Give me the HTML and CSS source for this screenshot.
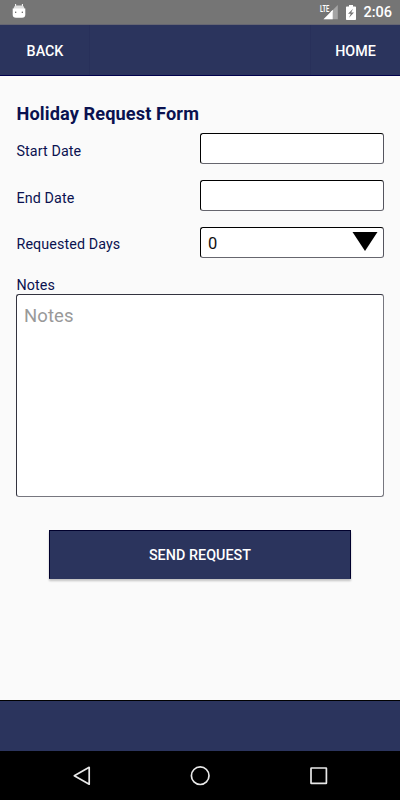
FILE: index.html
```html
<!DOCTYPE html>
<html lang="en">
<head>
<meta charset="utf-8">
<title>Holiday Request Form</title>
<link rel="stylesheet" href="styles.css">
</head>
<body>
<div class="screen">
  <div class="status">
    <svg class="android" width="14" height="16" viewBox="0 0 14 16">
      <path d="M3.6 1v4M10.4 1v4" stroke="#fff" stroke-width="1"/>
      <path d="M1.500 6Q2 2.600 4.500 2.600H9.500Q12 2.600 12.500 6Z" fill="#ddd"/>
      <path d="M.7 5.600H13.300V11.500Q13.300 14.800 10 14.800H4Q.7 14.800 .7 11.500Z" fill="#fff"/>
      <circle cx="3.700" cy="9.200" r=".7" fill="#555"/><circle cx="10.300" cy="9.200" r=".7" fill="#555"/>
    </svg>
    <div class="status-right">
      <svg class="signal" width="20" height="16" viewBox="0 0 20 16">
        <path d="M18.800 1V15.300H4.500Z" fill="#a5a5a5"/>
        <path d="M13.700 6V15.300H4.500Z" fill="#fff"/>
        <path d="M0 0H11V8.300H0Z" fill="#757575"/>
        <text x="1" y="7.600" class="lte" textLength="9.200" lengthAdjust="spacingAndGlyphs">LTE</text>
        <path d="M13.700 6V8.300H11.400Z" fill="#fff"/>
      </svg>
      <svg class="battery" width="10" height="15" viewBox="0 0 10 15">
        <path d="M3 0H7V1.500H9.200Q10 1.500 10 2.300V14.200Q10 15 9.200 15H.8Q0 15 0 14.200V2.300Q0 1.500 .8 1.500H3Z" fill="#fff"/>
        <path d="M7 3.700L2 8.800H4.800L3 12.700L8 7.600H5.200Z" fill="#757575"/>
      </svg>
      <span class="clock">2:06</span>
    </div>
  </div>
  <header class="bar">
    <button class="bar-btn back">BACK</button>
    <button class="bar-btn home">HOME</button>
  </header>
  <main class="form">
    <h1>Holiday Request Form</h1>
    <div class="row"><label>Start Date</label><div class="field"></div></div>
    <div class="row"><label>End Date</label><div class="field"></div></div>
    <div class="row days"><label>Requested Days</label><div class="field select"><span>0</span>
      <svg width="26" height="19" viewBox="0 0 26 19"><path d="M.5 0H25.500L13 19Z" fill="#000"/></svg></div></div>
    <label class="notes-label">Notes</label>
    <div class="notes">Notes</div>
    <button class="send">SEND REQUEST</button>
  </main>
  <footer class="footer"></footer>
  <nav class="nav">
    <svg width="400" height="49" viewBox="0 0 400 49" fill="none" stroke="#e8e8e8" stroke-width="1.700">
      <path d="M74.300 24.700L89.200 16.300V33.200Z" stroke-linejoin="round"/>
      <circle cx="200.200" cy="24.700" r="8.800"/>
      <rect x="311" y="17" width="15.400" height="15.400" rx=".4"/>
    </svg>
  </nav>
</div>
</body>
</html>
```
FILE: styles.css
```css
* { box-sizing: border-box; }
body { margin: 0; font-family: Roboto, "Liberation Sans", sans-serif; }
button { font-family: inherit; margin: 0; padding: 0; border: 0; }
svg { display: block; }
.screen { width: 400px; height: 800px; display: flex; flex-direction: column; background: #fafafa; overflow: hidden; }
.status { height: 25px; flex: none; background: #757575; display: flex; justify-content: space-between; padding: 3px 8px 0 12px; border-bottom: 1px solid #666672; }
.status-right { display: flex; }
.signal { margin-top: 1px; }
.lte { font: 700 8.500px Roboto, sans-serif; fill: #fff; }
.battery { margin: 2px 7px 0 7px; }
.clock { font-size: 14.500px; font-weight: 500; line-height: 20px; color: #fff; }
.bar { height: 51px; flex: none; background: #2b345d; border-bottom: 1px solid #00004c; display: flex; justify-content: space-between; }
.bar-btn { width: 90px; padding-top: 2px; background: transparent; color: #fff; font-size: 14.300px; font-weight: 500; }
.bar-btn.back { border-right: 1px solid #28305a; padding-left: 1px; }
.bar-btn.home { border-left: 1px solid #28305a; }
.form { flex: 1; padding: 26px 16px 0; color: #0a1250; }
h1 { margin: 0; padding-left: .5px; font-size: 18.200px; line-height: 24px; font-weight: 700; height: 31px; letter-spacing: .1px; }
.row { display: flex; justify-content: space-between; height: 47px; }
label { font-size: 14.300px; line-height: 20px; padding: 8px 0 0 .5px; letter-spacing: .1px; }
.days label { padding-top: 7px; }
.field { width: 184px; height: 31px; background: #fff; border: 1px solid #000; border-right-color: #55555f; border-bottom-color: #66666e; border-radius: 3px; }
.select { display: flex; justify-content: space-between; padding: 4px 5px 0 7px; font-size: 16.500px; line-height: 24px; color: #111; }
.notes-label { display: block; padding: 1px 0 0 .5px; height: 20px; }
.notes { height: 203px; background: #fff; border: 1px solid #33333f; border-right-color: #77777f; border-bottom-color: #77777f; border-radius: 3px; padding: 9px 7px; font-size: 18.500px; line-height: 24px; letter-spacing: .1px; color: #999; }
.send { display: block; width: 302px; height: 49px; margin: 33px auto 0 33px; background: #2b345d; border: 1px solid #00002c; border-bottom-color: #2b345d; box-shadow: 0 2px 2px rgba(0,0,0,.22); color: #fff; font-size: 14.300px; font-weight: 500; letter-spacing: .06px; }
.footer { height: 51px; flex: none; background: #2b345d; border-top: 1px solid #000; }
.nav { height: 49px; flex: none; background: #000; }
```
